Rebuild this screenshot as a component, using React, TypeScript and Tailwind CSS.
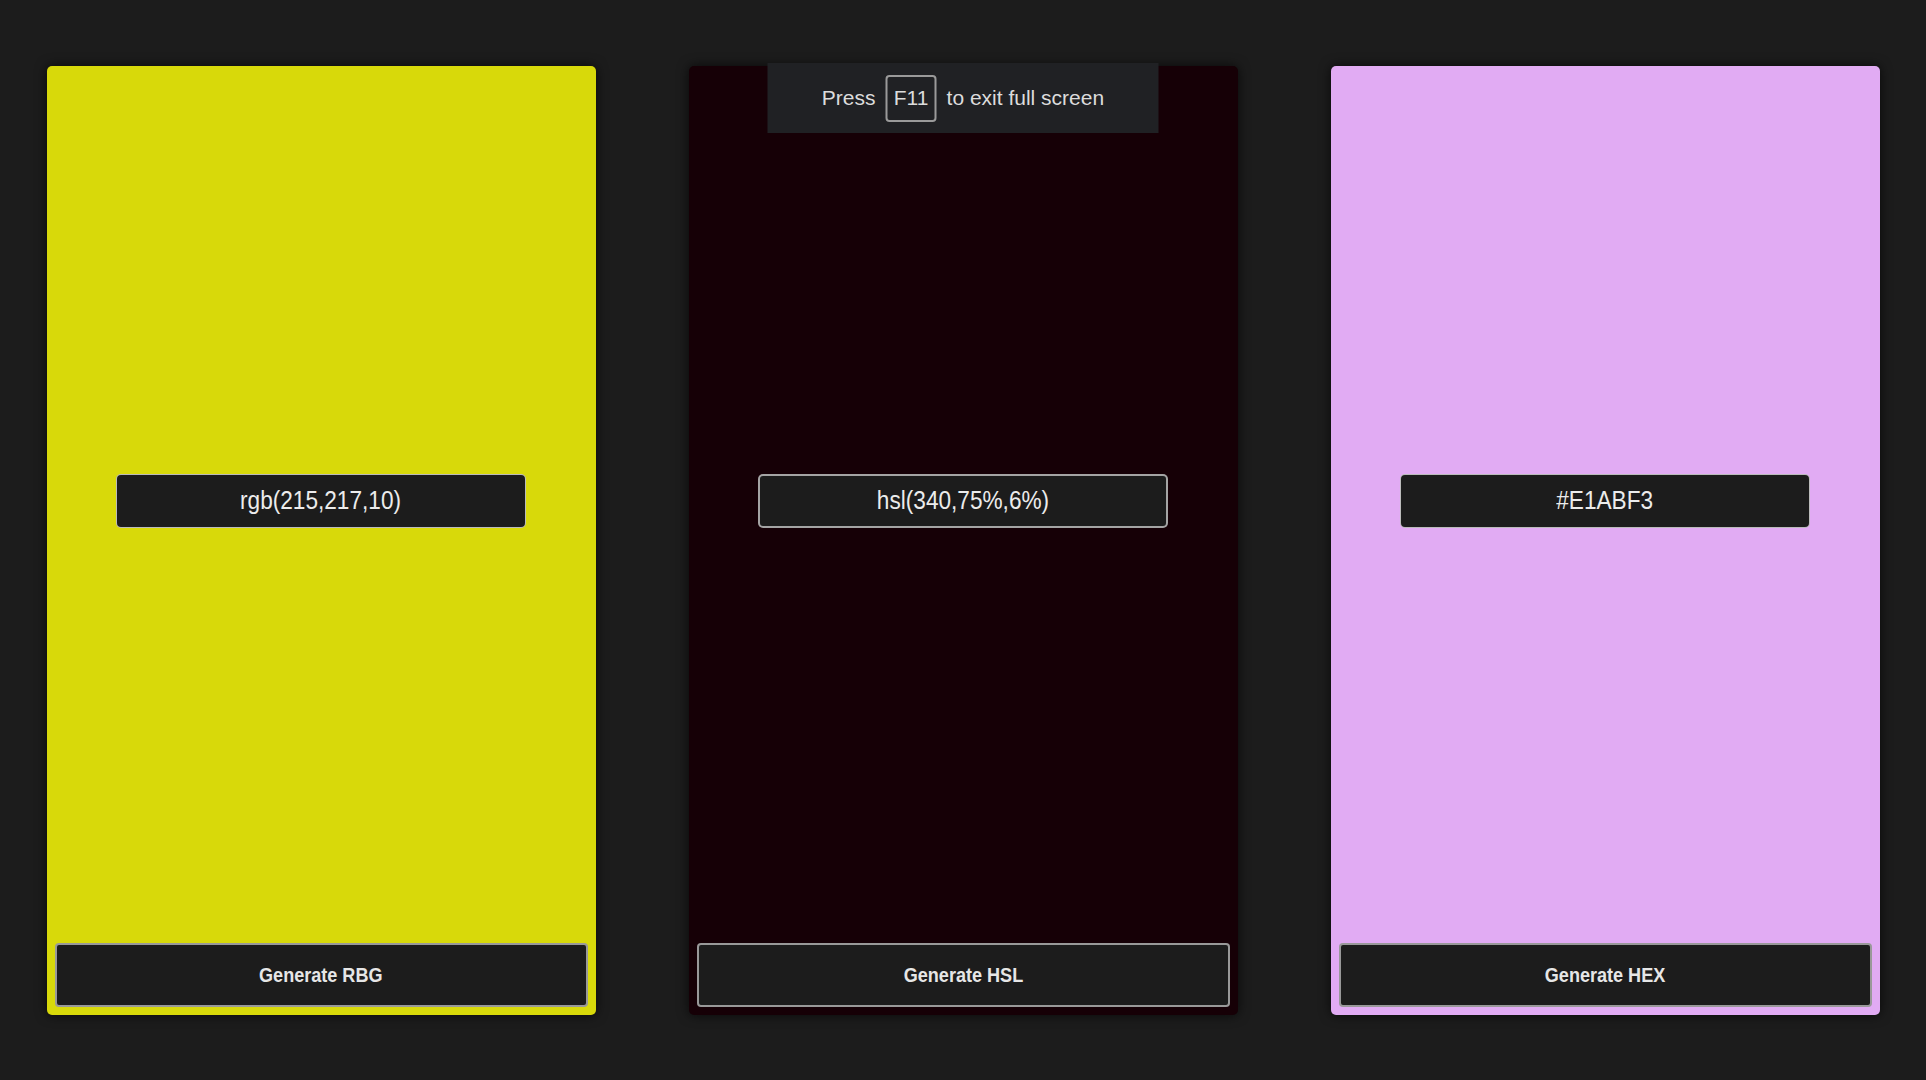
import React from "react";

const font = { fontFamily: '"Liberation Sans", Arial, sans-serif' };

interface ColorCardProps {
  value: string;
  label: string;
  bg: string;
  boxBorder: string;
}

function ColorCard({ value, label, bg, boxBorder }: ColorCardProps) {
  return (
    <div
      className={`w-[549px] h-[949px] rounded-[5px] flex flex-col px-2 pb-2 shadow-[0_0_12px_rgba(0,0,0,0.7)] ${bg}`}
    >
      {/* value display */}
      <div className="flex-1 flex items-center justify-center">
        <div
          className={`w-[410px] h-[54px] rounded-[5px] bg-[#1c1c1c] flex items-center justify-center ${boxBorder}`}
        >
          <span className="inline-block text-[26px] text-[#ececec] scale-x-[0.87]">
            {value}
          </span>
        </div>
      </div>

      <button className="mt-[7px] h-16 w-full rounded-[4px] bg-[#1c1c1c] border-2 border-white/55 flex items-center justify-center">
        <span className="inline-block text-[21px] font-bold text-[#e6e6e6] scale-x-[0.86]">
          {label}
        </span>
      </button>
    </div>
  );
}

export default function App() {
  return (
    <div
      className="relative h-[1080px] w-full bg-[#1c1c1c] flex items-center justify-around"
      style={font}
    >
      <ColorCard
        value="rgb(215,217,10)"
        label="Generate RBG"
        bg="bg-[#d8d90a]"
        boxBorder="border border-white/70"
      />
      <ColorCard
        value="hsl(340,75%,6%)"
        label="Generate HSL"
        bg="bg-[#160006]"
        boxBorder="border-2 border-white/60"
      />
      <ColorCard
        value="#E1ABF3"
        label="Generate HEX"
        bg="bg-[#e1abf3]"
        boxBorder="border border-white/70"
      />

      {/* browser fullscreen toast */}
      <div className="absolute top-[63px] left-1/2 -translate-x-1/2 w-[391px] h-[70px] bg-[#202124] flex items-center justify-center gap-[10px] text-[21px] text-[#dcdcdc]">
        <span>Press</span>
        <span className="w-[51px] h-[47px] rounded-[4px] border-2 border-[#9a9a9a] flex items-center justify-center">
          F11
        </span>
        <span>to exit full screen</span>
      </div>
    </div>
  );
}
